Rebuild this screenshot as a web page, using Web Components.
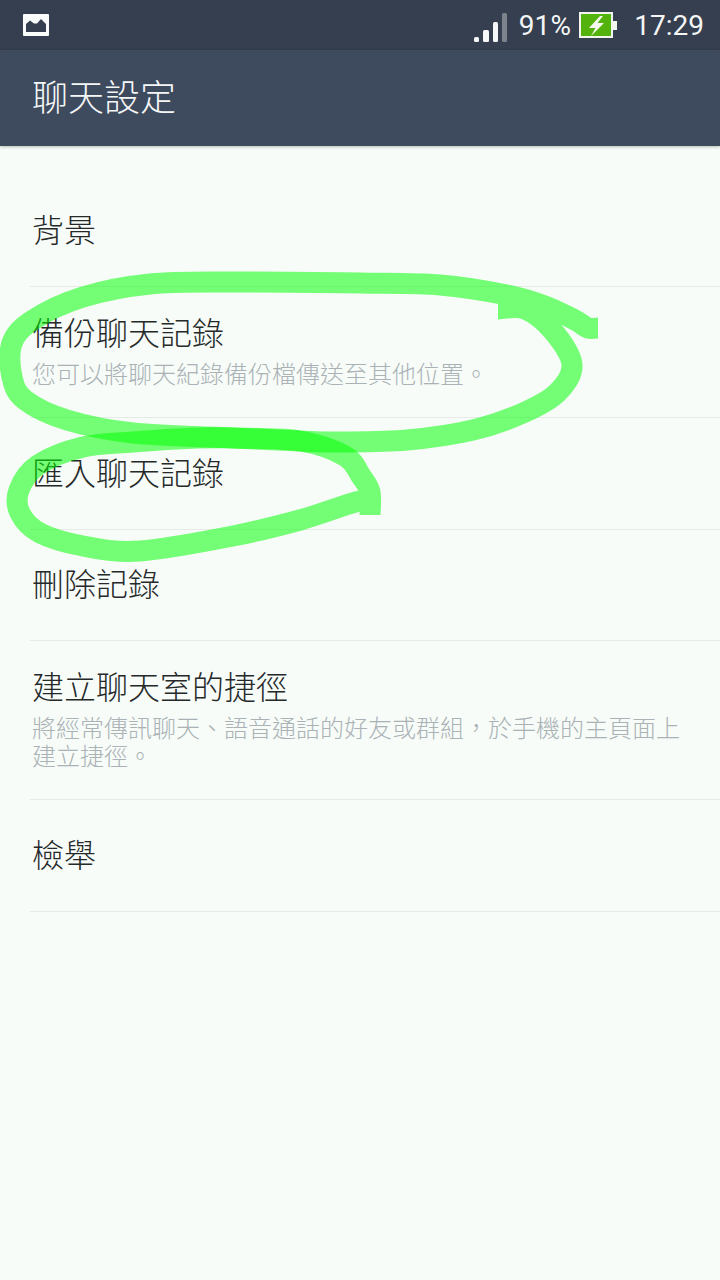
<!DOCTYPE html>
<html lang="zh-Hant"><head><meta charset="utf-8"><title>聊天設定</title>
<style>
html,body{margin:0;padding:0;height:100%;background:#f7fcf8}
body{width:720px;height:1280px;overflow:hidden;position:relative;font-family:"Noto Sans CJK TC","Noto Sans",sans-serif}
</style></head><body>
<status-bar></status-bar>
<app-bar>聊天設定</app-bar>
<settings-list>
<settings-row title-text="背景"></settings-row>
<settings-row title-text="備份聊天記錄">您可以將聊天紀錄備份檔傳送至其他位置。</settings-row>
<settings-row title-text="匯入聊天記錄"></settings-row>
<settings-row title-text="刪除記錄"></settings-row>
<settings-row title-text="建立聊天室的捷徑">將經常傳訊聊天、語音通話的好友或群組，於手機的主頁面上建立捷徑。</settings-row>
<settings-row title-text="檢舉"></settings-row>
</settings-list>
<marker-scribble></marker-scribble>
<script>
class StatusBar extends HTMLElement{constructor(){super();this.attachShadow({mode:'open'}).innerHTML=`<style>
:host{display:flex;align-items:flex-start;height:50px;background:#363f4f;color:#f4f6f6;font:28px/52px Roboto,"Noto Sans",sans-serif;padding:0 16px 0 23px;box-sizing:border-box}
.pic{display:block;margin-top:14px}.sp{flex:1}
.sig{display:block;margin:13px 12px 0 0}
.pct{margin-right:8px;letter-spacing:.2px}
.bat{display:block;margin:12px 17px 0 0}
</style>
<svg class="pic" width="26" height="22" viewBox="0 0 26 22"><rect width="26" height="22" rx="1" fill="#fbfcfc"/><path d="M3 18V10L7 6.500 11 9.500 14 9.500 18 5 23 10V18Z" fill="#363f4f"/></svg>
<span class="sp"></span>
<svg class="sig" width="33" height="29" viewBox="0 0 33 29"><rect x="0" y="24" width="5" height="5" rx="1.500" fill="#f6f7f7"/><rect x="9" y="17" width="6" height="12" rx="1.500" fill="#f6f7f7"/><rect x="19" y="9" width="5" height="20" rx="1.500" fill="#f6f7f7"/><rect x="28" y="0" width="5" height="29" rx="1.500" fill="#7c838d"/></svg>
<span class="pct">91%</span>
<svg class="bat" width="38" height="26" viewBox="0 0 38 26"><rect x="1" y="1" width="32" height="24" fill="#53b30c" stroke="#f2f5ee" stroke-width="2"/><rect x="34" y="9" width="4" height="9" fill="#f2f5ee"/><path d="M21 4 10 16H16.500L12 24 25 11H18.500L24 4Z" fill="#f4f8ee"/></svg>
<span>17:29</span>`}}
class AppBar extends HTMLElement{constructor(){super();this.attachShadow({mode:'open'}).innerHTML=`<style>
:host{display:flex;align-items:center;box-sizing:border-box;height:96px;background:#3e4b5f;color:#f5f7f7;padding:0 0 7px 32px;font:300 36px/1 "Noto Sans CJK TC",sans-serif;box-shadow:0 1px 3px rgba(0,0,0,.25);position:relative}
</style><slot></slot>`}}
class SettingsList extends HTMLElement{constructor(){super();this.attachShadow({mode:'open'}).innerHTML=`<style>
:host{display:flex;flex-direction:column;padding:29.500px 0 0 30px;background:#f7fcf8}
</style><slot></slot>`}}
class SettingsRow extends HTMLElement{constructor(){super();this.attachShadow({mode:'open'}).innerHTML=`<style>
:host{display:flex;flex-direction:column;justify-content:center;box-sizing:border-box;min-height:111.500px;padding:0 36px 5px 2px;border-bottom:1px solid #e6ebe8}
:host([has-sub]){padding-top:24px;padding-bottom:30px}
.t{font:300 32px/40px "Noto Sans CJK TC",sans-serif;color:#26292a}
.s{font:300 24px/28px "Noto Sans CJK TC",sans-serif;color:#aab2b6;margin-top:8px;display:none}
:host([has-sub]) .s{display:block}
</style><div class="t"></div><div class="s"><slot></slot></div>`}
connectedCallback(){this.shadowRoot.querySelector('.t').textContent=this.getAttribute('title-text');if(this.textContent.trim())this.setAttribute('has-sub','')}}
function smooth(p){let d=`M${p[0][0]} ${p[0][1]}`;for(let i=0;i<p.length-1;i++){const a=p[Math.max(i-1,0)],b=p[i],c=p[i+1],e=p[Math.min(i+2,p.length-1)];d+=`C${(b[0]+(c[0]-a[0])/6).toFixed(1)} ${(b[1]+(c[1]-a[1])/6).toFixed(1)} ${(c[0]-(e[0]-b[0])/6).toFixed(1)} ${(c[1]-(e[1]-b[1])/6).toFixed(1)} ${c[0]} ${c[1]}`}return d}
class MarkerScribble extends HTMLElement{constructor(){super();
const a=[[498,309],[525,309],[553,331],[572,365],[557,393],[523,413],[473,430],[407,440],[340,442],[300,441],[233,438],[133,433],[67,420],[25,400],[12,377],[12,343],[33,320],[83,297],[150,284],[233,282],[360,283],[440,285],[507,295],[545,306],[575,320],[588,328],[598,328]];
const b=[[376,505],[360,501],[300,520],[233,536],[140,551],[83,546],[40,533],[20,513],[19,490],[38,465],[83,447],[133,442],[197,438],[233,438],[300,441],[345,456],[361,476],[370,492],[370,515]];
this.attachShadow({mode:'open'}).innerHTML=`<style>
:host{position:absolute;left:0;top:0;width:720px;height:1280px;pointer-events:none;display:block}
svg{display:block}path{fill:none;stroke:#00ff00;stroke-opacity:.53;stroke-width:21;stroke-linejoin:round;stroke-linecap:butt}
</style><svg width="720" height="1280" viewBox="0 0 720 1280"><path d="${smooth(a)}"/><path d="${smooth(b)}"/></svg>`}}
customElements.define('status-bar',StatusBar);
customElements.define('app-bar',AppBar);
customElements.define('settings-list',SettingsList);
customElements.define('settings-row',SettingsRow);
customElements.define('marker-scribble',MarkerScribble);
</script>
</body></html>
